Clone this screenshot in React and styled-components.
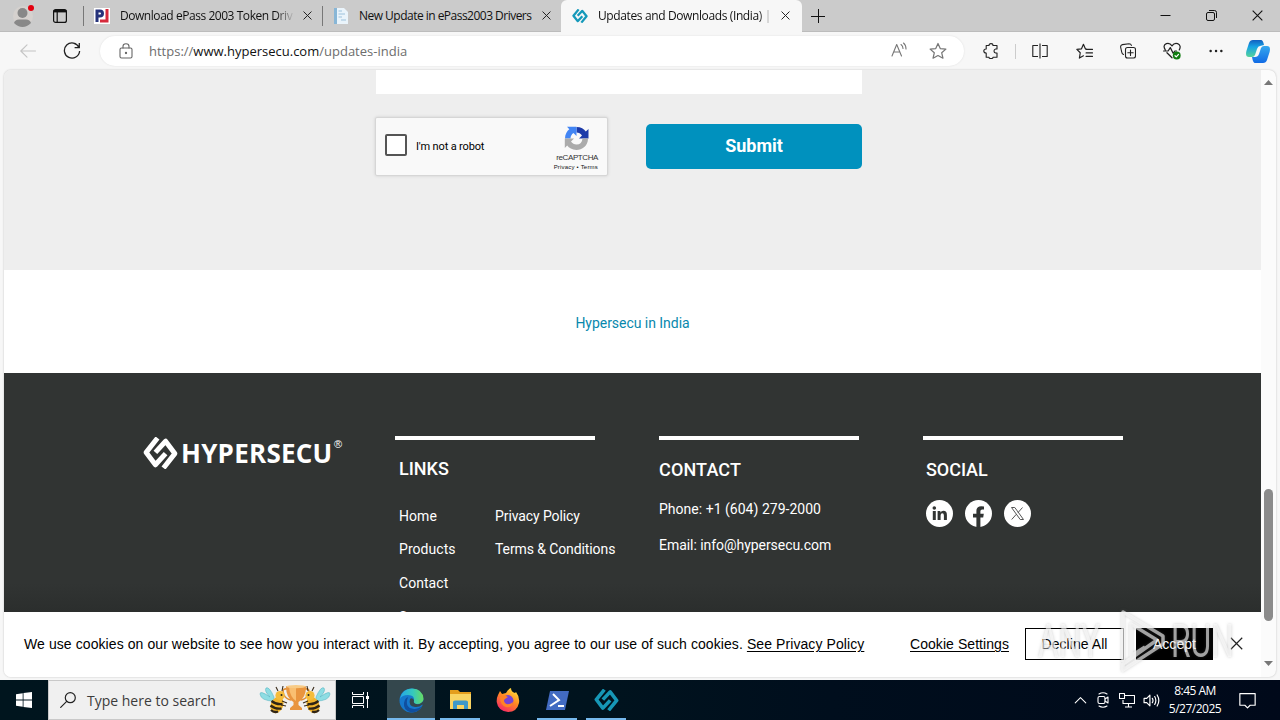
import React from 'react'
import styled, { createGlobalStyle, css } from 'styled-components'

const GlobalStyle = createGlobalStyle`
  * { box-sizing: border-box; }
  body { margin: 0; overflow: hidden; font-family: Roboto, "Liberation Sans", sans-serif; }
  svg { display: block; flex: none; }
`

const uiFont = css`
  font-family: "Open Sans", "Noto Sans", sans-serif;
`

const Screen = styled.div`
  position: relative;
  width: 1280px;
  height: 720px;
  display: flex;
  flex-direction: column;
  background: #f7f7f7;
  overflow: hidden;
`

/* ---------- browser chrome ---------- */

const TabStrip = styled.div`
  height: 32px;
  display: flex;
  background: #cbcbcb;
  border-bottom: 1px solid #bcbcbc;
`

const StripTools = styled.div`
  width: 83px;
  display: flex;
  align-items: center;
  gap: 16px;
  padding-left: 11px;
`

const Tab = styled.div`
  ${uiFont}
  width: ${p => p.$width}px;
  height: ${p => (p.$active ? 32 : 31)}px;
  display: flex;
  align-items: center;
  padding: 0 9px ${p => (p.$active ? 1 : 0)}px ${p => p.$pad}px;
  gap: ${p => p.$gap}px;
  font-size: 12px;
  color: #111;
  background: ${p => (p.$active ? '#f7f7f7' : 'transparent')};
  border-radius: ${p => (p.$active ? '6px 6px 0 0' : '0')};
`

const TabSplit = styled.div`
  width: 1px;
  height: 20px;
  margin-top: 6px;
  background: #777;
`

const TabTitle = styled.div`
  width: ${p => p.$width}px;
  flex: none;
  white-space: nowrap;
  letter-spacing: ${p => p.$track}px;
  mask-image: ${p => (p.$fade ? `linear-gradient(to right, #000 ${p.$fade}%, transparent 101%)` : 'none')};
`

const NewTab = styled.div`
  flex: 1;
  display: flex;
  align-items: center;
  padding-left: 9px;
`

const WindowButtons = styled.div`
  display: flex;
  align-items: center;
  gap: 35px;
  padding-right: 17px;
`

const Toolbar = styled.div`
  height: 38px;
  display: flex;
  align-items: center;
  padding-left: 20px;
`

const NavIcons = styled.div`
  width: 80px;
  display: flex;
  align-items: center;
  gap: 27px;
`

const AddressBar = styled.div`
  ${uiFont}
  width: 864px;
  height: 30px;
  display: flex;
  align-items: center;
  padding: 0 17px 0 18px;
  border-radius: 15px;
  background: #fff;
  box-shadow: 0 0 2px #ddd;
  font-size: 13px;
  color: #6d6d6d;
`

const Url = styled.div`
  flex: 1;
  padding-left: 15px;
  b { font-weight: 400; color: #111; }
`

const AddressActions = styled.div`
  display: flex;
  gap: 22px;
`

const ToolIcons = styled.div`
  display: flex;
  align-items: center;
  padding-left: 5px;
`

const ToolSlot = styled.div`
  width: 44px;
  display: flex;
  justify-content: center;
`

const ToolSplit = styled.div`
  width: 1px;
  height: 15px;
  margin: 0 2px;
  background: #ccc;
`

const CopilotSlot = styled.div`
  padding-left: 8px;
`

/* ---------- page ---------- */

const Viewport = styled.div`
  width: 1272px;
  height: 607px;
  margin: 0 0 3px 4px;
  display: flex;
  border-radius: 7px;
  overflow: hidden;
  background: #fbfbfb;
  box-shadow: 0 0 2px #bbb;
`

const Page = styled.div`
  width: 1257px;
  display: flex;
  flex-direction: column;
`

const FormArea = styled.div`
  height: 200px;
  padding-left: 371px;
  background: #eeeeee;
`

const MessageField = styled.div`
  width: 486px;
  height: 24px;
  margin-left: 1px;
  background: #fff;
`

const FormRow = styled.div`
  display: flex;
  padding-top: 23px;
`

const Captcha = styled.div`
  width: 233px;
  height: 59px;
  display: flex;
  align-items: center;
  padding: 0 9px 0 10px;
  background: #f9f9f9;
  border: 1px solid #d6d6d6;
  border-radius: 2px;
  box-shadow: 0 0 3px #ccc;
`

const CheckSquare = styled.div`
  width: 22px;
  height: 22px;
  margin-bottom: 3px;
  margin-left: -1px;
  border: 2px solid #555;
  border-radius: 2px;
  background: #fff;
`

const CaptchaLabel = styled.div`
  flex: 1;
  padding-left: 9px;
  font-size: 11px;
  letter-spacing: -0.15px;
  color: #000;
`

const CaptchaBrand = styled.div`
  width: 46px;
  display: flex;
  flex-direction: column;
  align-items: flex-end;
  padding-top: 4px;
  svg { margin-right: 9px; }
`

const BrandName = styled.div`
  font: 8px/10px "Liberation Sans", sans-serif;
  letter-spacing: -0.4px;
  margin-top: 2px;
  color: #333;
`

const BrandLegal = styled.div`
  font: 6px/9px "Liberation Sans", sans-serif;
  white-space: nowrap;
  letter-spacing: 0.2px;
  color: #111;
`

const Submit = styled.button`
  width: 216px;
  height: 45px;
  margin: 7px 0 0 38px;
  padding: 0 0 2px;
  border: 0;
  border-radius: 5px;
  background: #0091be;
  color: #fff;
  font: 700 18px Roboto, sans-serif;
`

const IndiaBand = styled.div`
  height: 103px;
  padding-top: 45px;
  text-align: center;
  background: #fff;
  color: #0788ad;
  font-size: 14px;
  line-height: 17px;
  letter-spacing: -0.04px;
`

const Footer = styled.div`
  height: 239px;
  display: flex;
  padding: 63px 0 0 139px;
  overflow: hidden;
  color: #fff;
  background: linear-gradient(#313433 88%, #2b2e2d);
`

const Brand = styled.div`
  width: 252px;
  display: flex;
  padding-top: 1px;
`

const BrandWord = styled.div`
  width: 152px;
  margin-left: 3px;
  font: 700 26px/33px "Open Sans", sans-serif;
  letter-spacing: 0.25px;
`

const Registered = styled.div`
  font: 11px/14px "Liberation Sans", sans-serif;
  padding-left: 1px;
`

const FooterColumn = styled.div`
  width: 264px;
`

const Rule = styled.div`
  width: 200px;
  height: 4px;
  background: #fff;
`

const Heading = styled.div`
  padding: ${p => p.$top}px 0 0 ${p => p.$left}px;
  font-weight: 500;
  font-size: 18px;
  line-height: 22px;
  letter-spacing: ${p => p.$track || 0}px;
`

const LinkColumns = styled.div`
  display: flex;
  padding: 20px 0 0 4px;
`

const LinkList = styled.div`
  width: ${p => p.$width}px;
  flex: none;
  font-size: 14px;
  line-height: 33.4px;
  letter-spacing: ${p => p.$track || 0}px;
  white-space: nowrap;
  div:nth-child(4) { padding-top: 1px; }
`

const ContactLines = styled.div`
  padding-top: 10px;
`

const ContactLine = styled.div`
  height: 36px;
  font-size: 14px;
  line-height: 36px;
  letter-spacing: ${p => p.$track}px;
`

const SocialIcons = styled.div`
  display: flex;
  gap: 12px;
  padding: 19px 0 0 3px;
`

const CookieBar = styled.div`
  height: 65px;
  display: flex;
  align-items: center;
  padding: 0 0 1px 20px;
  background: #fff;
  color: #000;
  font: 14px "Liberation Sans", Arial, sans-serif;
  letter-spacing: 0.06px;
  white-space: nowrap;
  u { text-underline-offset: 2px; }
`

const CookieText = styled.div`
  width: 886px;
  letter-spacing: 0.083px;
`

const CookieSettings = styled.u`
  width: 115px;
`

const CookieButton = styled.div`
  width: ${p => p.$width}px;
  height: 32px;
  margin-right: 12px;
  line-height: 30px;
  text-align: center;
  border: 1px solid #000;
  background: ${p => (p.$dark ? '#000' : '#fff')};
  color: ${p => (p.$dark ? '#fff' : '#000')};
`

const CookieClose = styled.div`
  padding: 0 0 2px 5px;
`

const Scrollbar = styled.div`
  width: 15px;
  display: flex;
  flex-direction: column;
  align-items: center;
  padding: 10px 0 11px;
`

const ScrollThumb = styled.div`
  width: 9px;
  height: 132px;
  margin: 404px 0 auto;
  border-radius: 5px;
  background: #8b8b8b;
`

/* ---------- taskbar ---------- */

const Taskbar = styled.div`
  ${uiFont}
  height: 40px;
  display: flex;
  background: linear-gradient(to right, #00151e, #00131e 48%, #000e1d 65%, #00091a);
  color: #fff;
`

const Start = styled.div`
  width: 48px;
  display: flex;
  align-items: center;
  justify-content: center;
`

const Search = styled.div`
  width: 288px;
  display: flex;
  align-items: center;
  padding: 0 4px 0 11px;
  border: 1px solid #c9c9c9;
  background: #f0f0f0;
  color: #3c3c3c;
  font-size: 14px;
  span { flex: 1; padding-left: 11px; }
`

const TaskButton = styled.div`
  width: ${p => p.$width || 49}px;
  display: flex;
  align-items: center;
  justify-content: center;
  background: ${p => (p.$active ? '#34474d' : 'transparent')};
  box-shadow: ${p => (p.$open ? 'inset 0 -2px #76b9ed' : 'none')};
  margin: 0 ${p => p.$gap || 0}px;
`

const Tray = styled.div`
  margin-left: auto;
  display: flex;
  align-items: center;
  gap: 8px;
  padding-right: 24px;
`

const Clock = styled.div`
  width: 54px;
  font-size: 12px;
  line-height: 18px;
  white-space: nowrap;
  letter-spacing: -0.5px;
  margin: -1px 9px 0 0;
  display: flex;
  flex-direction: column;
  align-items: center;
`

/* translucent stamp that floats over the corner of the desktop */
const Watermark = styled.div`
  position: absolute;
  left: 1038px;
  top: 610px;
  width: 196px;
  height: 62px;
  display: flex;
  align-items: center;
  color: rgba(255, 255, 255, 0.6);
  font: 400 46px/62px Roboto, sans-serif;
  filter: drop-shadow(0 0 1.5px rgba(100, 100, 100, 0.5));
`

const StampWord = styled.div`
  width: ${p => p.$width}px;
  transform: scaleX(${p => p.$squeeze});
  transform-origin: left;
  white-space: nowrap;
`

const Mark = ({ width, height, color }) => (
  <svg width={width} height={height} viewBox="0 0 35 32" preserveAspectRatio="none" fill="none" stroke={color} strokeWidth="5" strokeLinejoin="round">
    <path d="M14.5 1 L3.2 15.4 L12.4 27.8 L22.6 16.6" />
    <path d="M20.5 31 L31.8 16.6 L22.6 4.2 L12.4 15.4" />
  </svg>
)

const Cross = ({ size = 10, color = '#222', weight = 1.1 }) => (
  <svg width={size} height={size} viewBox="0 0 10 10" stroke={color} strokeWidth={weight}>
    <path d="M.6 .6l8.8 8.8M9.4 .6L.6 9.4" />
  </svg>
)

const Icon = ({ size = 16, color = '#222', weight = 1.1, children }) => (
  <svg width={size} height={size} viewBox="0 0 16 16" fill="none" stroke={color} strokeWidth={weight} strokeLinejoin="round" strokeLinecap="round">
    {children}
  </svg>
)

const Bee = ({ flip }) => (
  <g transform={flip ? 'translate(72 0) scale(-1 1)' : undefined}>
    <path d="M15 13Q10 2 7 4Q5 7 11 13Q1 6 1 10Q2 17 15 17Z" fill="#8edde3" stroke="#58b5c2" strokeWidth=".6" />
    <ellipse cx="18" cy="21" rx="6.2" ry="8.5" transform="rotate(24 18 21)" fill="#f1b42c" />
    <path d="M12.5 17q5 4 11 3M11.5 21.5q5 4 11 3M12 26q3 3 7 1.5" stroke="#2f2416" strokeWidth="2.3" fill="none" />
    <circle cx="21" cy="11.5" r="4.6" fill="#f5bd3b" />
    <circle cx="22.5" cy="11" r="1" fill="#222" />
    <path d="M19 7l-2-4M23 7l1-5M23 17l5 2M22 21l5 1" stroke="#392a19" strokeWidth="1.1" fill="none" />
  </g>
)

const SearchArt = () => (
  <svg width="72" height="32" viewBox="0 0 72 32">
    <path d="M28 5q-6-1-3 6q2 4 7 5M46 5q6-1 3 6q-2 4-7 5" fill="none" stroke="#df8e35" strokeWidth="1.6" />
    <path d="M27 2H47Q47 14 39.5 18V21L43 24V26H31V24L34.5 21V18Q27 14 27 2Z" fill="#e9953f" />
    <path d="M30 3H37V17Q31 13 30 3Z" fill="#f9bf71" />
    <ellipse cx="37" cy="2.6" rx="10" ry="1.6" fill="#f8cb86" />
    <Bee />
    <Bee flip />
  </svg>
)

const CaptchaLogo = () => (
  <svg width="25" height="25" viewBox="0 0 25 25">
    <path d="M12.5 1C17 1 20 3 21.8 5.5L24.5 3V12.5H15L18 9.5Q16 6.5 12.5 6.5Z" fill="#1c3aa9" />
    <path d="M1 12.5C1 8 3 5 5.3 3.2L3 .8H12.5V10L9.5 7Q6.5 9 6.5 12.5Z" fill="#4285f4" />
    <path d="M24 12.5C24 20 18 24 12.5 24C8 24 5 22 3.2 19.6L.8 22V12.5H10L7 15.5Q9 18.5 12.5 18.5Q18 18.5 18.5 12.5Z" fill="#ababab" />
  </svg>
)

const EdgeIcon = () => (
  <svg width="25" height="25" viewBox="0 0 25 25">
    <defs>
      <linearGradient id="edgeTop" x1="0" x2="1">
        <stop offset="0" stopColor="#25a7e8" />
        <stop offset=".55" stopColor="#35c8bd" />
        <stop offset="1" stopColor="#68dc62" />
      </linearGradient>
    </defs>
    <circle cx="12.5" cy="12.5" r="12" fill="#1678cc" />
    <path d="M.8 11Q3 .5 13 .5Q24 1 24.5 11Q24 16 18 16Q14 16 15 13Q16 7 9 7Q3 7 .8 11Z" fill="url(#edgeTop)" />
    <path d="M9 9Q5 20 15 21Q19 21.5 23 18Q19 25 12 24.5Q4 22 5 15Q6 10 9 9Z" fill="#104f9f" />
    <path d="M11 11Q9 18 16 19Q20 19.5 23.5 16.5L24.5 18L25 12Q22 17 17 16Q14 15 15 12Q13 9 11 11Z" fill="#34474d" />
  </svg>
)

const FirefoxIcon = () => (
  <svg width="24" height="25" viewBox="0 0 24 25">
    <defs>
      <linearGradient id="fox" x1=".8" y1="0" x2=".2" y2="1">
        <stop offset="0" stopColor="#ffe63e" />
        <stop offset=".45" stopColor="#ff8a22" />
        <stop offset="1" stopColor="#f5206b" />
      </linearGradient>
    </defs>
    <path d="M2 7L4 3L6 6L10 5Q12 1 15 0Q15 4 19 5L20 4Q24 9 23 15Q21 24 12 24Q2 23 .7 14Q.5 10 2 7Z" fill="url(#fox)" />
    <circle cx="12" cy="12.5" r="5.4" fill="#7543d4" />
    <path d="M4 9Q8 6 12 9L9 11Q7 12 9 15Q12 18 17 14Q16 20 10 19Q4 17 4 9Z" fill="#ff8225" />
  </svg>
)

const FolderIcon = () => (
  <svg width="23" height="20" viewBox="0 0 23 20">
    <path d="M1 0H9L11 2H22V18H1Z" fill="#e49e1d" />
    <path d="M1 4H22V19H1Z" fill="#f9d462" />
    <path d="M4 19V12Q4 10.5 6 10.5H17Q19 10.5 19 12V19H15V15H8V19Z" fill="#3e99c9" />
  </svg>
)

const ShellIcon = () => (
  <svg width="23" height="19" viewBox="0 0 23 19">
    <path d="M4 0H23L19 19H0Z" fill="#426bc2" />
    <path d="M7 3L13 9L4 15M12 15H18" stroke="#fff" strokeWidth="2" fill="none" />
  </svg>
)

const CopilotIcon = () => (
  <svg width="24" height="23" viewBox="0 0 24 23">
    <defs>
      <linearGradient id="copA" x1="0" y1="0" x2="0" y2="1">
        <stop offset="0" stopColor="#125fc0" />
        <stop offset=".4" stopColor="#17a3e4" />
        <stop offset="1" stopColor="#55d39a" />
      </linearGradient>
      <linearGradient id="copB" x1="0" y1="0" x2="0" y2="1">
        <stop offset="0" stopColor="#35a8ee" />
        <stop offset="1" stopColor="#116be5" />
      </linearGradient>
    </defs>
    <path d="M7 0H15Q17 0 18 5L14 6Q12 6 11 9L9 15Q8 17 6 17H3Q-1 17 .4 11L3 3Q4 0 7 0Z" fill="url(#copA)" />
    <path d="M17 23H9Q7 23 6 17H9Q12 17 13 14L15 8Q16 6 18 6H21Q25 6 23.6 12L21 20Q20 23 17 23Z" fill="url(#copB)" />
  </svg>
)

const App = () => {
  return (
    <Screen>
      <GlobalStyle />
      <TabStrip>
        <StripTools>
          <svg width="26" height="24" viewBox="0 0 26 24">
            <circle cx="12" cy="12" r="10" fill="#d5d1ce" />
            <circle cx="11.5" cy="9" r="5" fill="#888" />
            <path d="M3 19Q4 15.5 8 15.5H15Q19 15.5 20 19Q16 23 11.5 23Q7 23 3 19Z" fill="#888" />
            <circle cx="20" cy="4" r="3" fill="#e3000f" />
          </svg>
          <svg width="14" height="14" viewBox="0 0 14 14" fill="none" stroke="#111" strokeWidth="1.2">
            <rect x=".6" y=".6" width="12.8" height="12.8" rx="2" />
            <path d="M.6 2.2H13.4" strokeWidth="2.4" />
            <path d="M4.2 3V13" />
          </svg>
        </StripTools>
        <TabSplit />
        <Tab $width={238} $pad={10} $gap={10}>
          <svg width="16" height="16" viewBox="0 0 16 16">
            <path d="M0 0H16V16H0Z" fill="#fff" />
            <path d="M3 14V3H6Q8.5 3 8.5 5.5T6 8H3" fill="none" stroke="#26337b" strokeWidth="3" />
            <path d="M13 1V13H6" fill="none" stroke="#d62a3c" strokeWidth="3" />
          </svg>
          <TabTitle $width={173} $track={-0.45} $fade={90}>Download ePass 2003 Token Drive</TabTitle>
          <Cross size={9} />
        </Tab>
        <TabSplit />
        <Tab $width={238} $pad={10} $gap={10}>
          <svg width="16" height="16" viewBox="0 0 16 16">
            <path d="M1 0H11L15 4V16H1Z" fill="#eaf4fb" />
            <path d="M1 0H4V16H1Z" fill="#88b6d6" />
            <path d="M5.5 3H9M5.5 6H12M5.5 9H9M8 12H13" stroke="#9dc2dc" />
          </svg>
          <TabTitle $width={173} $track={-0.52}>New Update in ePass2003 Drivers</TabTitle>
          <Cross size={9} />
        </Tab>
        <Tab $active $width={241} $pad={11} $gap={10}>
          <Mark width={16} height={14} color="#1599ba" />
          <TabTitle $width={173} $track={-0.38} $fade={93}>Updates and Downloads (India) |</TabTitle>
          <Cross size={9} />
        </Tab>
        <NewTab>
          <svg width="14" height="14" viewBox="0 0 14 14" stroke="#111">
            <path d="M0 7.5H14M7.5 0V14" />
          </svg>
        </NewTab>
        <WindowButtons>
          <svg width="11" height="11" viewBox="0 0 11 11" stroke="#111"><path d="M.5 5.5H10.5" /></svg>
          <svg width="11" height="11" viewBox="0 0 11 11" fill="none" stroke="#111">
            <rect x=".5" y="2.5" width="8" height="8" rx="1.5" />
            <path d="M3 .5H8.5Q10.5 .5 10.5 2.5V8" />
          </svg>
          <Cross size={11} color="#111" weight={1} />
        </WindowButtons>
      </TabStrip>

      <Toolbar>
        <NavIcons>
          <Icon color="#c4c4c4"><path d="M15.5 8H.8M7 1.8L.8 8L7 14.2" /></Icon>
          <svg width="18" height="18" viewBox="0 0 18 18" fill="none" stroke="#222" strokeWidth="1.3">
            <path d="M16 5.5A7.6 7.6 0 1 0 16.6 9M16.3 1V5.7H11.6" />
          </svg>
        </NavIcons>
        <AddressBar>
          <Icon color="#666">
            <rect x="2" y="5" width="12" height="10" rx="1.5" />
            <path d="M5 5V3.5Q5 .8 8 .8T11 3.5V5" />
            <circle cx="8" cy="10" r=".6" fill="#666" />
          </Icon>
          <Url>https://<b>www.hypersecu.com</b>/updates-india</Url>
          <AddressActions>
            <Icon color="#777">
              <path d="M1 14L5.7 2.5L10.5 14M2.7 10H9M10 2.5Q12 4 12 6.5M12.5 1Q15 3 15 7" />
            </Icon>
            <Icon size={18} color="#777">
              <path d="M8 1.3L10 5.8L15 6.3L11.3 9.6L12.4 14.4L8 12L3.6 14.4L4.7 9.6L1 6.3L6 5.8Z" />
            </Icon>
          </AddressActions>
        </AddressBar>
        <ToolIcons>
          <ToolSlot>
            <Icon>
              <path d="M3.2 2.5H6Q6 .6 8 .6T10 2.5H14V6H12.6Q11 6.4 11 8T12.6 10H14V14.2H10Q10 15.6 8 15.6T6 14.2H3.2V10Q.8 10 .8 8T3.2 6Z" />
            </Icon>
          </ToolSlot>
          <ToolSplit />
          <ToolSlot>
            <Icon><path d="M6 2.5H.8V13.5H6M10 2.5H15.2V13.5H10M8 .5V15.5" strokeLinecap="butt" /></Icon>
          </ToolSlot>
          <ToolSlot>
            <Icon size={17}>
              <path d="M9.5 5.5H8.8L7 1.2L5.2 5.5L.8 6L4 9.2L3.2 14.2L7 12M9.5 6H15.5M9.5 9.3H15.5M9.5 12.6H15.5" />
            </Icon>
          </ToolSlot>
          <ToolSlot>
            <Icon>
              <rect x="5.5" y="4.5" width="10" height="10.5" rx="2" />
              <path d="M10.5 7V12.5M7.8 9.7H13.2M3.5 11.5Q2 11 1.7 9L.6 4Q.5 2 2.4 1.6L9 .8Q11 .8 11.4 2.4" />
            </Icon>
          </ToolSlot>
          <ToolSlot>
            <Icon size={18}>
              <path d="M2 7Q-.5 3 3 1.5Q6 .5 8 3.5Q10 .5 13 1.5Q16.5 3 14.5 7M3.5 9.5L8 14M.5 8H4.5L6.5 5L9 10L10.5 8H12" />
              <circle cx="12.2" cy="12" r="3.5" fill="#107c10" stroke="none" />
              <path d="M10.7 12.2L11.8 13.2L13.8 11" stroke="#fff" />
            </Icon>
          </ToolSlot>
          <ToolSlot>
            <Icon><path d="M2.6 8H2.7M8 8H8.1M13.3 8H13.4" strokeWidth="2.4" /></Icon>
          </ToolSlot>
          <CopilotSlot><CopilotIcon /></CopilotSlot>
        </ToolIcons>
      </Toolbar>

      <Viewport>
        <Page>
          <FormArea>
            <MessageField />
            <FormRow>
              <Captcha>
                <CheckSquare />
                <CaptchaLabel>I'm not a robot</CaptchaLabel>
                <CaptchaBrand>
                  <CaptchaLogo />
                  <BrandName>reCAPTCHA</BrandName>
                  <BrandLegal>Privacy • Terms</BrandLegal>
                </CaptchaBrand>
              </Captcha>
              <Submit>Submit</Submit>
            </FormRow>
          </FormArea>
          <IndiaBand>Hypersecu in India</IndiaBand>
          <Footer>
            <Brand>
              <Mark width={35} height={32} color="#fff" />
              <BrandWord>HYPERSECU</BrandWord>
              <Registered>®</Registered>
            </Brand>
            <FooterColumn>
              <Rule />
              <Heading $top={18} $left={4}>LINKS</Heading>
              <LinkColumns>
                <LinkList $width={96} $track={0.05}>
                  <div>Home</div>
                  <div>Products</div>
                  <div>Contact</div>
                  <div>Support</div>
                </LinkList>
                <LinkList $track={-0.1}>
                  <div>Privacy Policy</div>
                  <div>Terms &amp; Conditions</div>
                </LinkList>
              </LinkColumns>
            </FooterColumn>
            <FooterColumn>
              <Rule />
              <Heading $top={19} $left={0} $track={0.15}>CONTACT</Heading>
              <ContactLines>
                <ContactLine $track={0.02}>Phone: +1 (604) 279-2000</ContactLine>
                <ContactLine $track={-0.05}>Email: info@hypersecu.com</ContactLine>
              </ContactLines>
            </FooterColumn>
            <FooterColumn>
              <Rule />
              <Heading $top={19} $left={3} $track={-0.05}>SOCIAL</Heading>
              <SocialIcons>
                <svg width="27" height="27" viewBox="0 0 27 27">
                  <circle cx="13.5" cy="13.5" r="13.5" fill="#fff" />
                  <circle cx="8.3" cy="8" r="1.8" fill="#313433" />
                  <path d="M6.8 11H9.8V20H6.8ZM11.6 11H14.4V12.4Q15.4 10.8 17.4 10.8Q20.9 10.8 20.9 15V20H17.9V15.5Q17.9 13.2 16.3 13.2Q14.6 13.2 14.6 15.5V20H11.6Z" fill="#313433" />
                </svg>
                <svg width="27" height="27" viewBox="0 0 27 27">
                  <circle cx="13.5" cy="13.5" r="13.5" fill="#fff" />
                  <path d="M11.4 27V17.5H8V13.8H11.4V11Q11.4 6.2 16.2 6.2L19 6.5V9.6H17.2Q15.4 9.6 15.4 11.3V13.8H18.8L18.2 17.5H15.4V27Z" fill="#313433" />
                </svg>
                <svg width="27" height="27" viewBox="0 0 27 27">
                  <circle cx="13.5" cy="13.5" r="13.5" fill="#fff" />
                  <path d="M7.5 7.5H10.8L19.5 19.5H16.2ZM18.5 7.5L14 12.6M12.3 14.3L7.7 19.5" fill="none" stroke="#555" strokeWidth="1" />
                </svg>
              </SocialIcons>
            </FooterColumn>
          </Footer>
          <CookieBar>
            <CookieText>
              We use cookies on our website to see how you interact with it. By accepting, you agree to our use of such cookies. <u>See Privacy Policy</u>
            </CookieText>
            <CookieSettings>Cookie Settings</CookieSettings>
            <CookieButton $width={99}>Decline All</CookieButton>
            <CookieButton $dark $width={77}>Accept</CookieButton>
            <CookieClose><Cross size={13} weight={0.9} /></CookieClose>
          </CookieBar>
        </Page>
        <Scrollbar>
          <svg width="9" height="5" viewBox="0 0 9 5"><path d="M0 5L4.5 0L9 5Z" fill="#777" /></svg>
          <ScrollThumb />
          <svg width="9" height="5" viewBox="0 0 9 5"><path d="M0 0L4.5 5L9 0Z" fill="#777" /></svg>
        </Scrollbar>
      </Viewport>

      <Taskbar>
        <Start>
          <svg width="16" height="16" viewBox="0 0 16 16" fill="#fff">
            <path d="M0 2.2L6.7 1.2V7.5H0ZM7.5 1.1L16 0V7.5H7.5ZM0 8.4H6.7V14.8L0 13.8ZM7.5 8.4H16V16L7.5 14.9Z" />
          </svg>
        </Start>
        <Search>
          <Icon color="#222" weight={1.2}><circle cx="10.3" cy="5.7" r="5" /><path d="M6.7 9.3L.7 15.3" /></Icon>
          <span>Type here to search</span>
          <SearchArt />
        </Search>
        <TaskButton $width={48}>
          <svg width="17" height="16" viewBox="0 0 17 16" fill="none" stroke="#fff">
            <path d="M.5 0V2.5H11.5V0M.5 16V13.5H11.5V16M.5 4.5H11.5V11.5H.5ZM15.5 0V16" />
            <path d="M14 4H17V7H14Z" fill="#fff" stroke="none" />
          </svg>
        </TaskButton>
        <TaskButton $width={48} $gap={3} $active $open><EdgeIcon /></TaskButton>
        <TaskButton $width={40} $gap={2} $open><FolderIcon /></TaskButton>
        <TaskButton $width={46} $gap={3}><FirefoxIcon /></TaskButton>
        <TaskButton $width={40} $gap={3} $open><ShellIcon /></TaskButton>
        <TaskButton $width={40} $gap={6} $open><Mark width={25} height={22} color="#1697b6" /></TaskButton>
        <Tray>
          <Icon size={13} color="#fff" weight={1.3}><path d="M1.5 11L8 4.5L14.5 11" /></Icon>
          <Icon color="#fff">
            <rect x="3" y="4.5" width="7" height="7" rx="1.5" />
            <path d="M10 7L13 5V11L10 9M4 2Q8 -.5 12 2M4 14Q8 16.5 12 14" />
          </Icon>
          <Icon color="#fff">
            <path d="M6 3.5H15.5V11.5H4V8M9.5 12V15M6 15H13M.5 1.5H5.5V6.5H.5ZM3 4H3.2" strokeLinecap="butt" />
          </Icon>
          <Icon size={17} color="#fff"><path d="M1 6H3.5L6.5 3V13L3.5 10H1ZM8.8 6Q10 8 8.8 10M11 4.3Q13.2 8 11 11.7M13.3 2.8Q16.5 8 13.3 13.2" /></Icon>
          <Clock><div>8:45 AM</div><div>5/27/2025</div></Clock>
          <Icon size={17} color="#fff"><path d="M.8 1.5H15.2V12.5H10.5L8 15L5.5 12.5H.8Z" /></Icon>
        </Tray>
      </Taskbar>

      <Watermark>
        <StampWord $width={77} $squeeze={0.69}>ANY</StampWord>
        <svg width="56" height="62" viewBox="0 0 56 62" fill="none" stroke="currentColor" strokeWidth="3.5" strokeLinejoin="round">
          <path d="M8 52V2L48 26V34L8 60V54L42 30L16 14V46L30 37" />
        </svg>
        <StampWord $width={62} $squeeze={0.69}>RUN</StampWord>
      </Watermark>
    </Screen>
  )
}

export default App
